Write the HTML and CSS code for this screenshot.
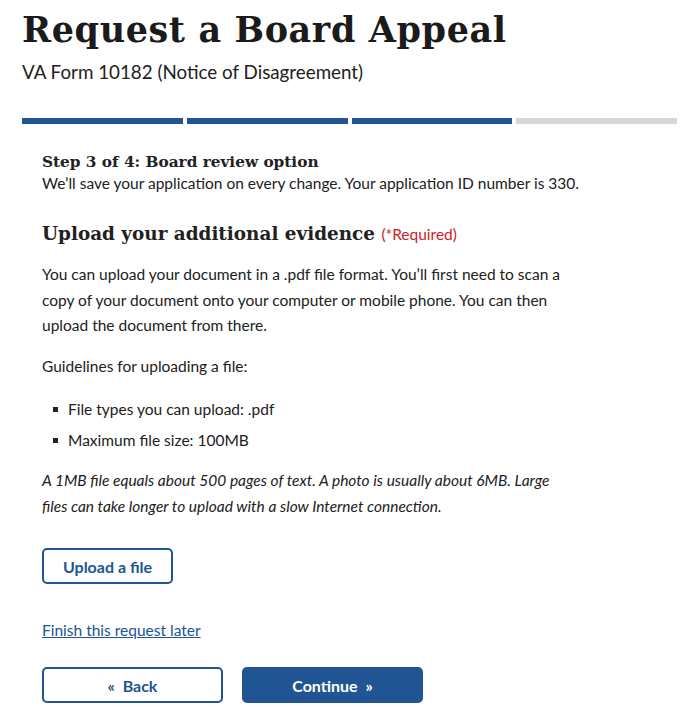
FILE: index.html
```html
<!DOCTYPE html>
<html lang="en">
<head>
<meta charset="utf-8">
<title>Request a Board Appeal</title>
<link rel="stylesheet" href="styles.css">
</head>
<body>
<main class="page">
  <header class="page-head">
    <h1 class="title">Request a Board Appeal</h1>
    <p class="subtitle">VA Form 10182 (Notice of Disagreement)</p>
  </header>
  <div class="progress">
    <span class="seg done"></span>
    <span class="seg done"></span>
    <span class="seg done"></span>
    <span class="seg"></span>
  </div>
  <section class="form">
    <h2 class="step">Step 3 of 4: Board review option</h2>
    <p class="save-note">We’ll save your application on every change. Your application ID number is 330.</p>
    <h3 class="question">Upload your additional evidence <span class="req">(*Required)</span></h3>
    <p class="body-text">You can upload your document in a .pdf file format. You’ll first need to scan a copy of your document onto your computer or mobile phone. You can then upload the document from there.</p>
    <p class="body-text">Guidelines for uploading a file:</p>
    <ul class="guides">
      <li>File types you can upload: .pdf</li>
      <li>Maximum file size: 100MB</li>
    </ul>
    <p class="note">A 1MB file equals about 500 pages of text. A photo is usually about 6MB. Large files can take longer to upload with a slow Internet connection.</p>
    <div class="upload-row"><button class="btn btn-outline upload">Upload a file</button></div>
    <a class="later" href="#">Finish this request later</a>
    <div class="nav">
      <button class="btn btn-outline nav-btn">«&nbsp; Back</button>
      <button class="btn btn-primary nav-btn">Continue&nbsp; »</button>
    </div>
  </section>
</main>
</body>
</html>
```

FILE: styles.css
```css
* { box-sizing: border-box; }
html, body { margin: 0; padding: 0; background: #fff; }
body {
  font-family: Lato, "Open Sans", sans-serif;
  color: #212121;
}
.page {
  width: 655px;
  margin-left: 22px;
  padding-top: 8.5px;
}
.title {
  font-family: "DejaVu Serif", serif;
  font-weight: 700;
  font-size: 35px;
  line-height: 41px;
  margin: 0;
  color: #1b1b1b;
  letter-spacing: 0.6px;
}
.subtitle {
  font-size: 18.8px;
  line-height: 1.3;
  margin: 10.3px 0 0;
  color: #212121;
}
.progress {
  display: flex;
  gap: 4px;
  margin-top: 34px;
}
.seg {
  flex: 1;
  height: 6px;
  background: #d6d7d9;
}
.seg.done { background: #205493; }
.form {
  padding: 28px 20px 0;
}
.step {
  font-family: "DejaVu Serif", serif;
  font-weight: 700;
  font-size: 15.3px;
  line-height: 20px;
  margin: 0;
}
.save-note {
  font-size: 15.5px;
  line-height: 22px;
  margin: 0;
}
.question {
  font-family: "DejaVu Serif", serif;
  font-weight: 700;
  font-size: 18.4px;
  line-height: 26px;
  margin: 27px 0 0;
}
.req {
  font-family: Lato, sans-serif;
  font-weight: 400;
  font-size: 15.5px;
  color: #cd2026;
}
.body-text {
  font-size: 15.5px;
  line-height: 25.5px;
  margin: 15px 0 0;
  max-width: 530px;
}
.guides {
  list-style: none;
  margin: 18px 0 0;
  padding: 0 0 0 11px;
  font-size: 15.5px;
  line-height: 25.5px;
}
.guides li {
  display: flex;
  align-items: center;
  gap: 10px;
}
.guides li + li { margin-top: 5px; }
.guides li::before {
  content: "";
  flex: none;
  width: 5px;
  height: 5px;
  background: #212121;
}
.note {
  font-style: italic;
  font-size: 15.5px;
  line-height: 25.5px;
  margin: 15px 0 0;
  max-width: 530px;
}
.upload-row { margin-top: 29px; }
.btn {
  font-family: Lato, sans-serif;
  font-weight: 700;
  font-size: 16px;
  height: 36px;
  border-radius: 5px;
  cursor: pointer;
}
.btn-outline {
  background: #fff;
  color: #205493;
  border: 2px solid #205493;
}
.btn-primary {
  background: #205493;
  color: #fff;
  border: 2px solid #205493;
}
.upload { width: 131px; padding: 0; }
.later {
  display: inline-block;
  margin-top: 35px;
  font-size: 15.5px;
  line-height: 22px;
  color: #205493;
}
.nav {
  display: flex;
  gap: 19px;
  margin-top: 26px;
}
.nav-btn { width: 181px; padding: 0; }
```
